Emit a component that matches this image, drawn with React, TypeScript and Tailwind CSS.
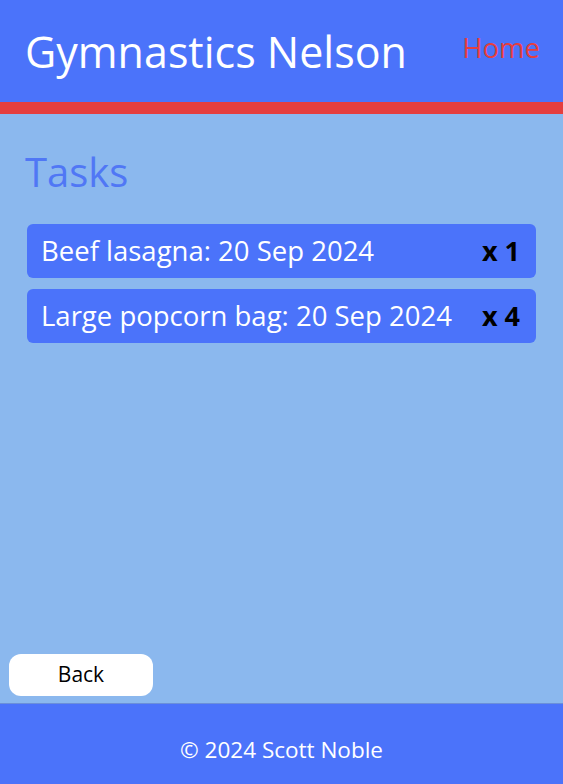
import React from "react";

const font = { fontFamily: '"Open Sans", "Noto Sans", sans-serif' };

export default function App() {
  return (
    <div className="flex min-h-[784px] flex-col bg-[#8bb8ee]" style={font}>
      <header className="flex h-[102px] items-center justify-between bg-[#4b73fa] pl-[25px] pr-[23px] border-b-[12px] border-[#e53e3e] box-content">
        <h1 className="text-[43px] leading-none text-white">Gymnastics Nelson</h1>
        <a className="mb-[6px] text-[27.5px] leading-none text-[#e53e3e]">Home</a>
      </header>
      <main className="flex flex-1 flex-col px-[27px] pt-[38px]">
        <h2 className="-ml-[2px] text-[40px] leading-none text-[#5077f5]">Tasks</h2>
        <ul className="mt-[32px] flex flex-col gap-[11px]">
          {[
            ["Beef lasagna: 20 Sep 2024", "x 1"],
            ["Large popcorn bag: 20 Sep 2024", "x 4"],
          ].map(([t, n]) => (
            <li key={t} className="flex h-[54px] items-center justify-between rounded-[6px] bg-[#4b73fa] pl-[14px] pr-[16px]">
              <span className="text-[27.5px] text-white">{t}</span>
              <span className="text-[27px] font-bold text-black">{n}</span>
            </li>
          ))}
        </ul>
        <div className="flex-1" />
        <div className="-ml-[18px] mb-[7px]">
          <button className="flex h-[42px] w-[144px] items-center justify-center rounded-[12px] bg-white text-[21px] text-black">
            Back
          </button>
        </div>
      </main>
      <footer className="flex h-[81px] items-center justify-center border-t border-[#6b8fd9] bg-[#4b73fa] pt-[12px]">
        <span className="text-[22.5px] text-white">© 2024 Scott Noble</span>
      </footer>
    </div>
  );
}
